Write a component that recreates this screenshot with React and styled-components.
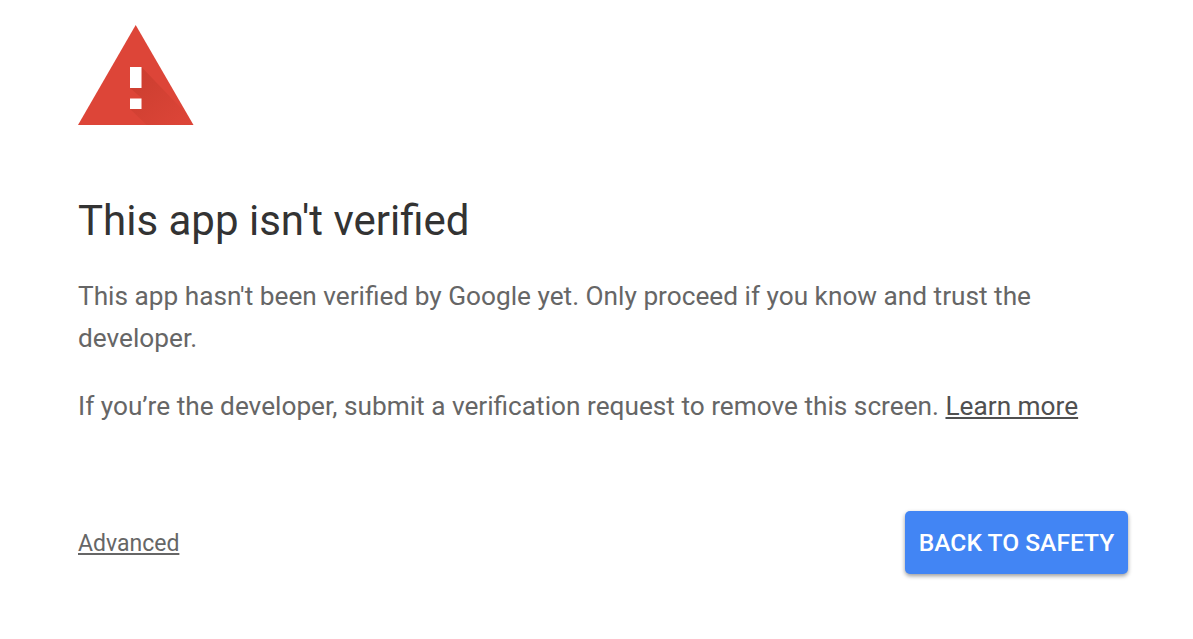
import React from "react";
import styled, { createGlobalStyle } from "styled-components";

const GlobalStyle = createGlobalStyle`
  html, body {
    margin: 0;
    padding: 0;
    background: #fff;
  }
`;

const Page = styled.div`
  width: 1193px;
  height: 639px;
  box-sizing: border-box;
  padding: 25px 65px 0 78px;
  font-family: Roboto, "Liberation Sans", sans-serif;
  overflow: hidden;
`;

const WarningIcon = styled.svg`
  display: block;
  width: 116px;
  height: 100px;
`;

const Title = styled.h1`
  margin: 68px 0 0;
  font-size: 42px;
  line-height: 56px;
  font-weight: 400;
  color: #333;
`;

const Paragraph = styled.p`
  margin: ${({ $top }) => $top}px 0 0;
  font-size: 26.23px;
  line-height: 42px;
  color: #666;
`;

const Link = styled.a`
  color: ${({ $dark }) => ($dark ? "#505050" : "#666")};
  text-decoration: underline;
  cursor: pointer;
`;

const Footer = styled.div`
  display: flex;
  align-items: center;
  justify-content: space-between;
  margin-top: 84px;
`;

const AdvancedLink = styled(Link)`
  margin-top: 2px;
  font-size: 23px;
`;

const Button = styled.button`
  width: 223px;
  height: 63px;
  padding: 0;
  border: none;
  border-radius: 5px;
  background: #4285f4;
  color: #fff;
  font-family: inherit;
  font-size: 24.6px;
  font-weight: 500;
  box-shadow: 0 2px 4px rgba(0, 0, 0, 0.4);
  cursor: pointer;
`;

export default function App() {
  return (
    <>
      <GlobalStyle />
      <Page>
        <WarningIcon viewBox="0 0 116 100">
          <defs>
            <linearGradient id="markShadow" x1="0.15" y1="0.1" x2="0.9" y2="0.9">
              <stop offset="0" stopColor="#a8301f" stopOpacity="0.32" />
              <stop offset="1" stopColor="#a8301f" stopOpacity="0.02" />
            </linearGradient>
          </defs>
          <polygon points="57.7,0 115.5,100 0,100" fill="#dd4538" />
          <polygon
            points="63.5,42 109.7,90 115.5,100 68.7,100 52,84 63.5,84 63.5,73 52,63 63.5,63"
            fill="url(#markShadow)"
          />
          <rect x="52" y="42" width="11.5" height="21" fill="#fff" />
          <rect x="52" y="73.5" width="11.5" height="10.5" fill="#fff" />
        </WarningIcon>
        <Title>This app isn't verified</Title>
        <Paragraph $top={26}>
          This app hasn't been verified by Google yet. Only proceed if you know
          and trust the developer.
        </Paragraph>
        <Paragraph $top={26}>
          If you’re the developer, submit a verification request to remove this
          screen. <Link $dark>Learn more</Link>
        </Paragraph>
        <Footer>
          <AdvancedLink>Advanced</AdvancedLink>
          <Button>BACK TO SAFETY</Button>
        </Footer>
      </Page>
    </>
  );
}
